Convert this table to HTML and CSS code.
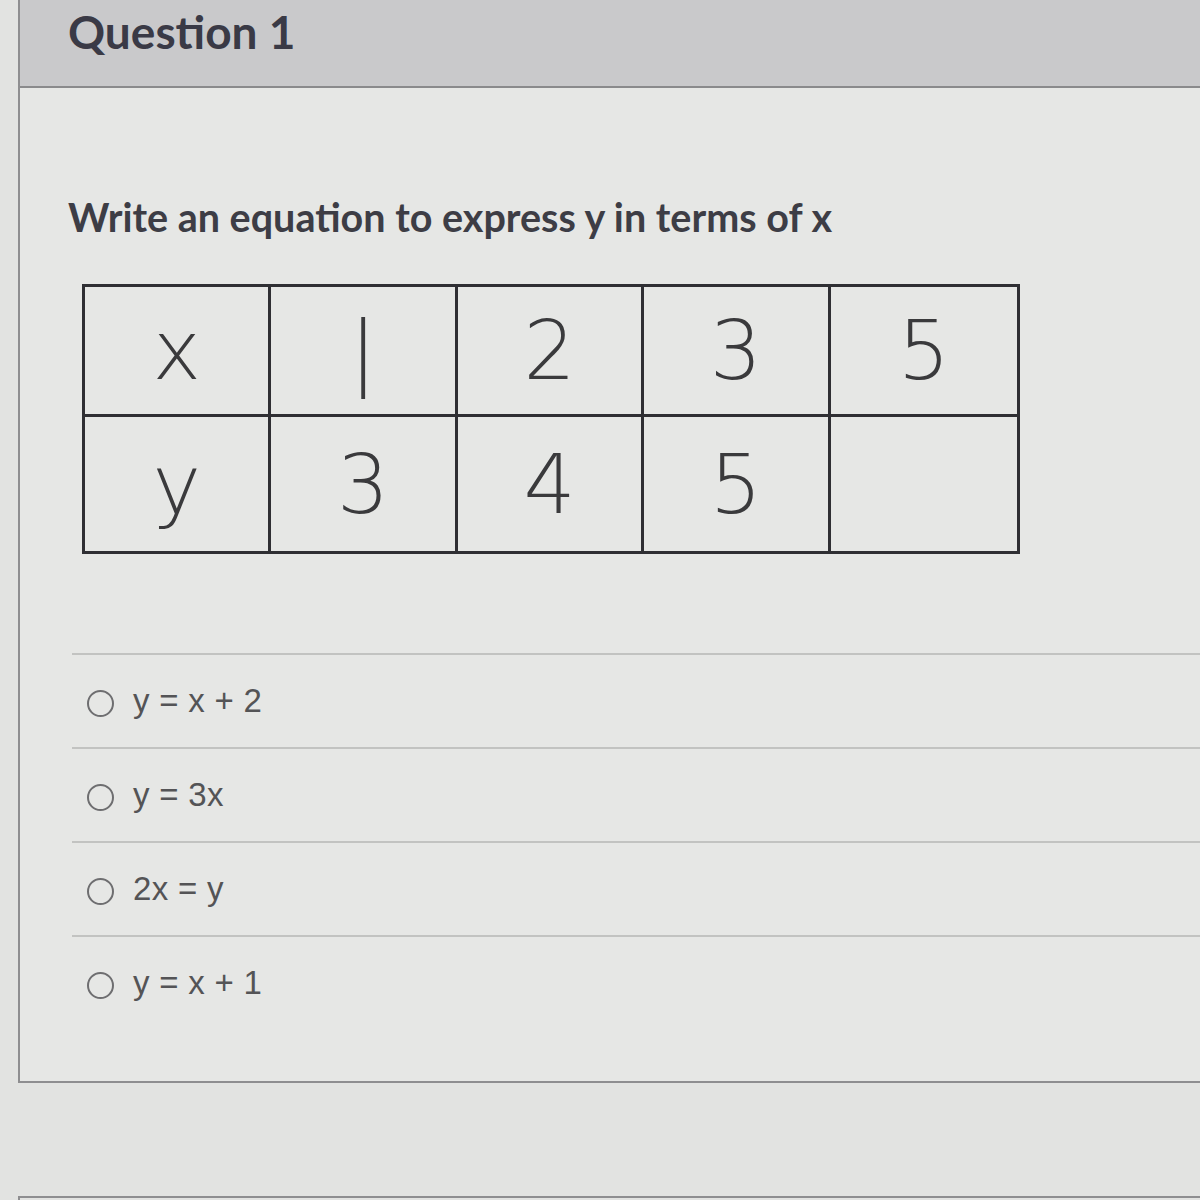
FILE: index.html
```html
<!DOCTYPE html>
<html>
<head>
<meta charset="utf-8">
<link rel="stylesheet" href="styles.css">
</head>
<body>
<div class="page">
  <div class="question">
    <div class="qhead"><h1 class="qtitle">Question 1</h1></div>
    <div class="qbody">
      <p class="prompt">Write an equation to express y in terms of x</p>
      <div class="grid">
        <div class="cell">x</div><div class="cell">|</div><div class="cell">2</div><div class="cell">3</div><div class="cell">5</div>
        <div class="cell">y</div><div class="cell">3</div><div class="cell">4</div><div class="cell">5</div><div class="cell"></div>
      </div>
      <ul class="answers">
        <li class="answer"><span class="radio"></span><span class="label">y = x + 2</span></li>
        <li class="answer"><span class="radio"></span><span class="label">y = 3x</span></li>
        <li class="answer"><span class="radio"></span><span class="label">2x = y</span></li>
        <li class="answer"><span class="radio"></span><span class="label">y = x + 1</span></li>
      </ul>
    </div>
  </div>
  <div class="next"></div>
</div>
</body>
</html>
```
FILE: styles.css
```css
html, body { margin: 0; padding: 0; }
body {
  width: 1200px;
  height: 1200px;
  overflow: hidden;
  background: #e2e3e1;
  font-family: Lato, "Liberation Sans", sans-serif;
}
.page { padding-left: 18px; }
.question {
  border-left: 2px solid #8e8e90;
  border-bottom: 2px solid #8e8e90;
  background: #e6e7e5;
}
.qhead {
  height: 88px;
  background: #c9c9cb;
  border-bottom: 2px solid #8a8a8c;
  box-sizing: border-box;
  padding-left: 48px;
}
.qtitle {
  margin: 0;
  font-size: 46px;
  font-weight: 700;
  line-height: 64px;
  color: #3a3a46;
}
.qbody { padding: 106px 0 52px 48px; }
.prompt {
  margin: 0;
  font-size: 39.5px;
  font-weight: 700;
  color: #3d3d45;
  line-height: 46px;
  letter-spacing: 0;
}
.grid {
  margin: 44px 0 0 14px;
  width: 938px;
  display: grid;
  grid-template-columns: repeat(5, 1fr);
  grid-template-rows: 130px 134px;
  border: 3px solid #2f2f33;
  box-sizing: border-box;
}
.cell {
  border-right: 3px solid #2f2f33;
  border-bottom: 3px solid #2f2f33;
  display: flex;
  align-items: center;
  justify-content: center;
  font-family: "DejaVu Sans", sans-serif;
  font-weight: 200;
  font-size: 82px;
  color: #3a3a3c;
}
.cell:nth-child(5n) { border-right: none; }
.cell:nth-child(n+6) { border-bottom: none; }
.answers {
  list-style: none;
  margin: 99px 0 0 4px;
  padding: 0;
}
.answer {
  height: 92px;
  border-top: 2px solid #c2c3c1;
  display: flex;
  align-items: center;
  padding-left: 15px;
}
.radio {
  width: 27px;
  height: 27px;
  border: 2px solid #6e6e70;
  border-radius: 50%;
  box-sizing: border-box;
  margin-right: 19px;
  margin-top: 4px;
}
.label {
  font-family: "Liberation Sans", Arial, sans-serif;
  font-size: 33px;
  letter-spacing: 0.3px;
  color: #545456;
}
.next {
  margin-top: 113px;
  border-top: 2px solid #8e8e90;
  border-left: 2px solid #8e8e90;
  height: 40px;
}
```
